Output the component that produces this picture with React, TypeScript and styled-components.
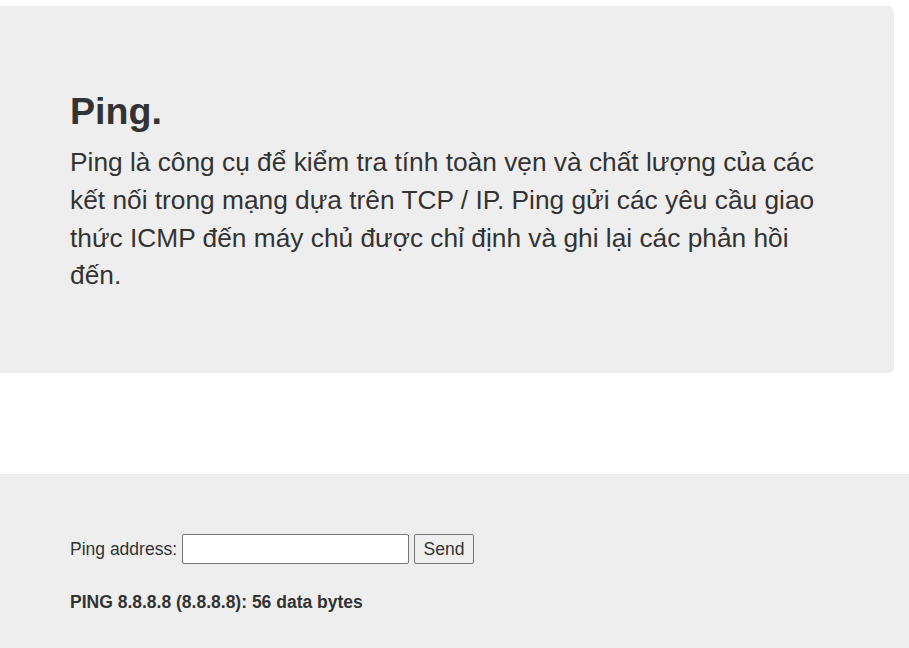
import React, { useState } from 'react';
import styled, { createGlobalStyle } from 'styled-components';

const GlobalStyle = createGlobalStyle`
    body{
        margin: 0;
        background-color: #fff;
        font-family: "Liberation Sans", Arial, sans-serif;
        color: #333;
    }
`

const Jumbotron = styled.div`
    margin-top: 6px;
    width: 894px;
    height: 367px;
    box-sizing: border-box;
    padding: 84px 70px 0 70px;
    background-color: #eee;
    border-radius: 0 6px 6px 0;
    h1{
        margin: 0 0 12px 0;
        font-size: 37.6px;
        font-weight: bold;
        line-height: 42px;
    }
    p{
        margin: 0;
        font-size: 26.3px;
        line-height: 37.8px;
    }
`

const PingSection = styled.div`
    margin-top: 101px;
    height: 174px;
    box-sizing: border-box;
    padding: 60px 70px 0 70px;
    background-color: #eee;
    font-size: 17.5px;
`

const PingForm = styled.form`
    display: flex;
    align-items: center;
    height: 30px;
    label{
        margin-right: 5px;
    }
`

const AddressInput = styled.input`
    width: 227px;
    height: 30px;
    box-sizing: border-box;
    border: 1px solid #767676;
    border-radius: 2px;
    background-color: #fff;
    padding: 0 4px;
    font-size: 17.5px;
    margin-right: 5px;
`

const SendButton = styled.button`
    height: 30px;
    width: 60px;
    box-sizing: border-box;
    border: 1px solid #767676;
    border-radius: 2px;
    background-color: #efefef;
    font-family: "Liberation Sans", Arial, sans-serif;
    font-size: 17.5px;
    color: #333;
    padding: 0;
`

const Result = styled.div`
    margin-top: 27px;
    font-weight: bold;
    line-height: 22px;
`

const App = () => {
    const [address, setAddress] = useState<string>('');
    return (
        <>
            <GlobalStyle />
            <Jumbotron>
                <h1>Ping.</h1>
                <p>Ping là công cụ để kiểm tra tính toàn vẹn và chất lượng của các kết nối trong mạng dựa trên TCP / IP. Ping gửi các yêu cầu giao thức ICMP đến máy chủ được chỉ định và ghi lại các phản hồi đến.</p>
            </Jumbotron>
            <PingSection>
                <PingForm onSubmit={(e) => e.preventDefault()}>
                    <label>Ping address:</label>
                    <AddressInput value={address} onChange={(e) => setAddress(e.target.value)} />
                    <SendButton type="submit">Send</SendButton>
                </PingForm>
                <Result>PING 8.8.8.8 (8.8.8.8): 56 data bytes</Result>
            </PingSection>
        </>
    );
};

export default App;
